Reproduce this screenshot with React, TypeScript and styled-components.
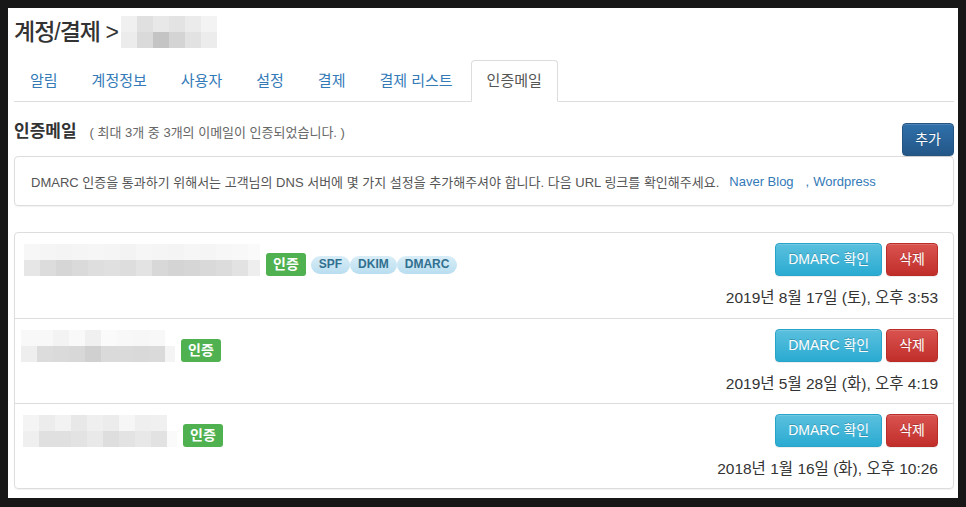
import styled, { createGlobalStyle } from "styled-components";

const GlobalStyle = createGlobalStyle`
  html, body {
    margin: 0;
    padding: 0;
    background-color: #171717;
  }
  body {
    font-family: "Liberation Sans", "Noto Sans CJK KR", sans-serif;
    color: #333;
  }
  * {
    box-sizing: border-box;
  }
`;

const Frame = styled.div`
  padding: 8px 8px 9px 8px;
  height: 507px;
`;

const Page = styled.main`
  background-color: #fff;
  height: 490px;
  padding: 0 4px 0 6px;
  overflow: hidden;
`;

const Header = styled.header`
  display: flex;
  align-items: center;
  height: 32px;
  margin-top: 8px;
`;

const Title = styled.h2`
  margin: 0 3px 0 0;
  font-size: 23px;
  font-weight: 500;
  letter-spacing: -1px;
  line-height: 32px;
  color: #333;
`;

const TabBar = styled.ul`
  display: flex;
  list-style: none;
  margin: 12px 0 0;
  padding: 0;
  border-bottom: 1px solid #ddd;
`;

const Tab = styled.li<{ $active?: boolean }>`
  margin: 0 2px -1px 0;
  padding: 10px 15px;
  line-height: 20px;
  font-size: 15px;
  border: 1px solid ${(p) => (p.$active ? "#ddd" : "transparent")};
  border-bottom-color: ${(p) => (p.$active ? "#fff" : "transparent")};
  border-radius: 4px 4px 0 0;
  background-color: ${(p) => (p.$active ? "#fff" : "transparent")};
  color: ${(p) => (p.$active ? "#555" : "#337ab7")};
  cursor: pointer;
`;

const SectionHead = styled.div`
  display: flex;
  justify-content: space-between;
  align-items: flex-start;
  margin-top: 21px;
`;

const Heading = styled.h3`
  margin: 0;
  font-size: 17px;
  font-weight: 700;
  line-height: 18px;
  color: #333;
  display: flex;
  align-items: baseline;
`;

const SubText = styled.small`
  margin-left: 13px;
  font-size: 13px;
  font-weight: 400;
  color: #666;
`;

const Button = styled.button<{ $variant: "primary" | "info" | "danger" }>`
  font-family: inherit;
  font-size: 14px;
  line-height: 19px;
  padding: 6px 12px;
  color: #fff;
  border-radius: 4px;
  cursor: pointer;
  text-shadow: 0 -1px 0 rgba(0, 0, 0, 0.2);
  box-shadow: inset 0 1px 0 rgba(255, 255, 255, 0.15), 0 1px 1px rgba(0, 0, 0, 0.075);
  ${(p) =>
    p.$variant === "primary"
      ? `background-image: linear-gradient(to bottom, #2f70aa 0, #245788 100%); border: 1px solid #245580;`
      : p.$variant === "info"
      ? `background-image: linear-gradient(to bottom, #5bc0de 0, #2aabd2 100%); border: 1px solid #28a4c9;`
      : `background-image: linear-gradient(to bottom, #d9534f 0, #c12e2a 100%); border: 1px solid #b92c28;`}
`;

const InfoBox = styled.div`
  display: flex;
  align-items: center;
  height: 50px;
  padding: 0 16px;
  border: 1px solid #ddd;
  border-radius: 4px;
  box-shadow: 0 1px 1px rgba(0, 0, 0, 0.05);
  font-size: 13px;
  color: #555;
`;

const Link = styled.a<{ $gap?: number }>`
  color: #337ab7;
  text-decoration: none;
  margin-left: ${(p) => p.$gap ?? 10}px;
`;

const Comma = styled.span`
  color: #337ab7;
  margin-left: 12px;
`;

const List = styled.ul`
  list-style: none;
  margin: 26px 0 0;
  padding: 0;
  border: 1px solid #ddd;
  border-radius: 4px;
  box-shadow: 0 1px 1px rgba(0, 0, 0, 0.05);
`;

const Row = styled.li`
  display: flex;
  justify-content: space-between;
  height: 85px;
  padding: 10px 15px 0 6px;
  & + & {
    border-top: 1px solid #ddd;
  }
`;

const Left = styled.div`
  display: flex;
  align-items: flex-end;
  gap: 6px;
  height: 33px;
`;

const Badges = styled.div`
  display: flex;
  align-items: center;
  gap: 5px;
`;

const Verified = styled.span`
  display: inline-block;
  height: 23px;
  line-height: 23px;
  padding: 0 7px;
  font-size: 14px;
  font-weight: 700;
  color: #fff;
  background-color: #4fb150;
  border-radius: 3px;
`;

const Pills = styled.div`
  display: flex;
`;

const Pill = styled.span`
  display: inline-block;
  height: 18px;
  line-height: 17px;
  padding: 0 8px;
  font-size: 12px;
  font-weight: 700;
  color: #31708f;
  background-image: linear-gradient(to bottom, #d9edf7 0, #b9def0 100%);
  border-radius: 9px;
`;

const Right = styled.div`
  display: flex;
  flex-direction: column;
  align-items: flex-end;
`;

const Actions = styled.div`
  display: flex;
  gap: 4px;
`;

const DateText = styled.div`
  margin-top: 12px;
  font-size: 15.5px;
  line-height: 20px;
  color: #333;
`;

// blurred (pixelated) mosaic like the one hiding the e-mail addresses
const Mosaic = ({
  rows,
  offset = 0,
  width,
  cell = 16,
}: {
  rows: number[][];
  offset?: number;
  width?: number;
  cell?: number;
}) => {
  const cols = Math.max(...rows.map((r) => r.length));
  return (
    <svg width={width ?? offset + cols * cell} height={rows.length * cell} style={{ display: "block", flexShrink: 0 }}>
      {rows.map((r, y) =>
        r.map((g, x) => (
          <rect key={`${x}-${y}`} x={offset + x * cell} y={y * cell} width={cell} height={cell} fill={`rgb(${g},${g},${g})`} />
        ))
      )}
    </svg>
  );
};

const tabs = ["알림", "계정정보", "사용자", "설정", "결제", "결제 리스트", "인증메일"];

interface IEmail {
  mosaic: number[][];
  offset: number;
  width: number;
  checks?: string[];
  date: string;
}

const emails: IEmail[] = [
  {
    offset: 3,
    width: 239,
    mosaic: [
      [247, 245, 244, 245, 246, 245, 243, 246, 245, 244, 246, 245, 247, 248, 250],
      [230, 220, 214, 218, 222, 224, 221, 227, 216, 212, 214, 217, 220, 226, 238],
    ],
    checks: ["SPF", "DKIM", "DMARC"],
    date: "2019년 8월 17일 (토), 오후 3:53",
  },
  {
    offset: 0,
    width: 154,
    mosaic: [
      [248, 248, 243, 249, 240, 250, 248, 247, 248, 255],
      [238, 220, 218, 216, 208, 218, 218, 217, 218, 244],
    ],
    date: "2019년 5월 28일 (화), 오후 4:19",
  },
  {
    offset: 2,
    width: 156,
    mosaic: [
      [244, 236, 242, 232, 239, 236, 246, 239, 240, 255],
      [239, 224, 224, 227, 233, 222, 227, 232, 226, 250],
    ],
    date: "2018년 1월 16일 (화), 오후 10:26",
  },
];

const App = () => {
  return (
    <Frame>
      <GlobalStyle />
      <Page>
        <Header>
          <Title>계정/결제 &gt;</Title>
          <Mosaic
            rows={[
              [240, 224, 232, 227, 235, 243],
              [236, 218, 196, 212, 226, 236],
            ]}
          />
        </Header>
        <TabBar>
          {tabs.map((t) => (
            <Tab key={t} $active={t === "인증메일"}>
              {t}
            </Tab>
          ))}
        </TabBar>
        <SectionHead>
          <Heading>
            인증메일
            <SubText>( 최대 3개 중 3개의 이메일이 인증되었습니다. )</SubText>
          </Heading>
          <Button $variant="primary">추가</Button>
        </SectionHead>
        <InfoBox>
          DMARC 인증을 통과하기 위해서는 고객님의 DNS 서버에 몇 가지 설정을 추가해주셔야 합니다. 다음 URL 링크를 확인해주세요.
          <Link href="#">Naver Blog</Link>
          <Comma>,</Comma>
          <Link href="#" $gap={4}>
            Wordpress
          </Link>
        </InfoBox>
        <List>
          {emails.map((e) => (
            <Row key={e.date}>
              <Left>
                <Mosaic rows={e.mosaic} offset={e.offset} width={e.width} />
                <Badges>
                  <Verified>인증</Verified>
                  {e.checks && (
                    <Pills>
                      {e.checks.map((c) => (
                        <Pill key={c}>{c}</Pill>
                      ))}
                    </Pills>
                  )}
                </Badges>
              </Left>
              <Right>
                <Actions>
                  <Button $variant="info">DMARC 확인</Button>
                  <Button $variant="danger">삭제</Button>
                </Actions>
                <DateText>{e.date}</DateText>
              </Right>
            </Row>
          ))}
        </List>
      </Page>
    </Frame>
  );
};

export default App;
